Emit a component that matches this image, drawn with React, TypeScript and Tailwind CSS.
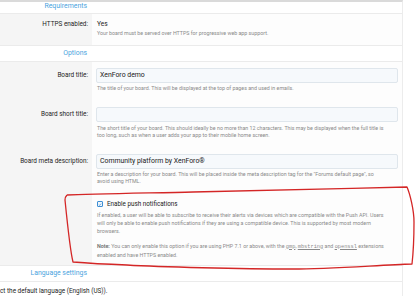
import type { ReactNode } from "react";

const hint = "text-[5.3px] leading-[7.5px] text-[#8a8a8a] whitespace-nowrap";

function Header({ title, tall = true }: { title: string; tall?: boolean }) {
  return (
    <div
      className={
        "flex border-b border-[#ebebeb] bg-white " +
        (tall ? "h-[16px] leading-[15px]" : "h-[12px] leading-[9px]")
      }
    >
      <div className="w-[92px] pr-[5px] text-right text-[6.9px] text-[#4ba4de] whitespace-nowrap">
        {title}
      </div>
    </div>
  );
}

function Row({
  label,
  labelPad,
  className,
  children,
}: {
  label?: string;
  labelPad: string;
  className: string;
  children: ReactNode;
}) {
  return (
    <div className="flex">
      <div
        className={
          "w-[92px] shrink-0 bg-[#f5f5f5] pr-[4px] text-right text-[6.4px] leading-[9px] text-[#1d1d1d] " +
          labelPad
        }
      >
        {label}
      </div>
      <div className={"flex-1 bg-[#fdfdfd] pl-[4px] pr-[4px] " + className}>
        {children}
      </div>
    </div>
  );
}

function TextBox({ value }: { value?: string }) {
  return (
    <div className="h-[15px] rounded-[2px] border border-[#dfe6ec] bg-[#f6f9fc] pl-[3px] text-[6.9px] leading-[13px] text-[#222]">
      {value}
    </div>
  );
}

export default function App() {
  return (
    <div className="relative h-[300px] w-[417px] overflow-hidden bg-white font-['Roboto',sans-serif]">
      <div className="w-[403px] border-r border-t-2 border-r-[#ececec] border-t-[#dadada]">
        <Header title="Requirements" tall={false} />

        <div className="border-b border-[#ebebeb]">
          <Row label="HTTPS enabled:" labelPad="pt-[6px]" className="pt-[6px] pb-[7.5px]">
            <div className="pl-[1px] text-[6.6px] leading-[9px] text-[#222]">Yes</div>
            <div className={"mt-[1px] pl-[1px] " + hint}>
              Your board must be served over HTTPS for progressive web app support.
            </div>
          </Row>
        </div>

        <Header title="Options" />

        <div className="border-b border-[#ebebeb]">
          <Row label="Board title:" labelPad="pt-[9px]" className="pt-[6px] pb-[6.5px]">
            <TextBox value="XenForo demo" />
            <div className={"mt-[2px] pl-[1px] " + hint}>
              The title of your board. This will be displayed at the top of pages and used in emails.
            </div>
          </Row>
          <Row label="Board short title:" labelPad="pt-[10.5px]" className="pt-[7.5px] pb-[7px]">
            <TextBox />
            <div className={"mt-[3px] pl-[1px] " + hint}>
              <div>
                The short title of your board. This should ideally be no more than 12 characters. This
                may be displayed when the full title is
              </div>
              <div>too long, such as when a user adds your app to their mobile home screen.</div>
            </div>
          </Row>
          <Row label="Board meta description:" labelPad="pt-[10px]" className="pt-[7px] pb-[6px]">
            <TextBox value="Community platform by XenForo®" />
            <div className={"mt-[2px] pl-[1px] " + hint}>
              <div>
                Enter a description for your board. This will be placed inside the meta description tag
                for the "Forums default page", so
              </div>
              <div>avoid using HTML.</div>
            </div>
          </Row>
          <Row labelPad="" className="pt-[8px] pb-[6px]">
            <div className="flex items-center pl-[1px]">
              <span className="flex h-[6px] w-[6px] items-center justify-center rounded-[1px] border border-[#3f8fd4] bg-[#eef6fd]">
                <svg viewBox="0 0 6 6" className="h-[5px] w-[5px]">
                  <path d="M1.2 3.1 L2.5 4.3 L4.8 1.6" fill="none" stroke="#2f7fc6" strokeWidth="0.9" />
                </svg>
              </span>
              <span className="ml-[4px] text-[6.3px] leading-[9px] text-[#222]">
                Enable push notifications
              </span>
            </div>
            <div className="mt-[2px] pl-[1px] text-[5.3px] leading-[8px] text-[#8a8a8a] whitespace-nowrap">
              <div>
                If enabled, a user will be able to subscribe to receive their alerts via devices which are
                compatible with the Push API. Users
              </div>
              <div>
                will only be able to enable push notifications if they are using a compatible device. This
                is supported by most modern
              </div>
              <div>browsers.</div>
              <div className="mt-[7px]">
                <span className="font-semibold text-[#6f6f6f]">Note:</span> You can only enable this option
                if you are using PHP 7.1 or above, with the{" "}
                <code className="font-['Liberation_Mono',monospace] underline">gmp</code>,{" "}
                <code className="font-['Liberation_Mono',monospace] underline">mbstring</code> and{" "}
                <code className="font-['Liberation_Mono',monospace] underline">openssl</code> extensions
              </div>
              <div>enabled and have HTTPS enabled.</div>
            </div>
          </Row>
        </div>

        <Header title="Language settings" />

        <div className="pt-[5.5px] text-[6.4px] leading-[9px] text-[#1d1d1d] whitespace-nowrap">
          ct the default language (English (US)).
        </div>
      </div>

      {/* hand-drawn highlight */}
      <svg className="pointer-events-none absolute inset-0" width="417" height="300" viewBox="0 0 417 300">
        <path
          d="M67 195 C 90 194, 150 193, 193 192 C 240 191, 330 189, 407 187 C 410 194, 414 210, 414 222 C 414 240, 413 255, 412 264 C 380 265, 330 269, 293 269 C 240 269, 160 267, 127 265 C 100 264, 85 263, 73 262 C 70 250, 67 220, 65 200 C 65 197, 66 196, 67 195"
          fill="none"
          stroke="#d42626"
          strokeWidth="1.3"
          strokeLinejoin="round"
        />
      </svg>
    </div>
  );
}
